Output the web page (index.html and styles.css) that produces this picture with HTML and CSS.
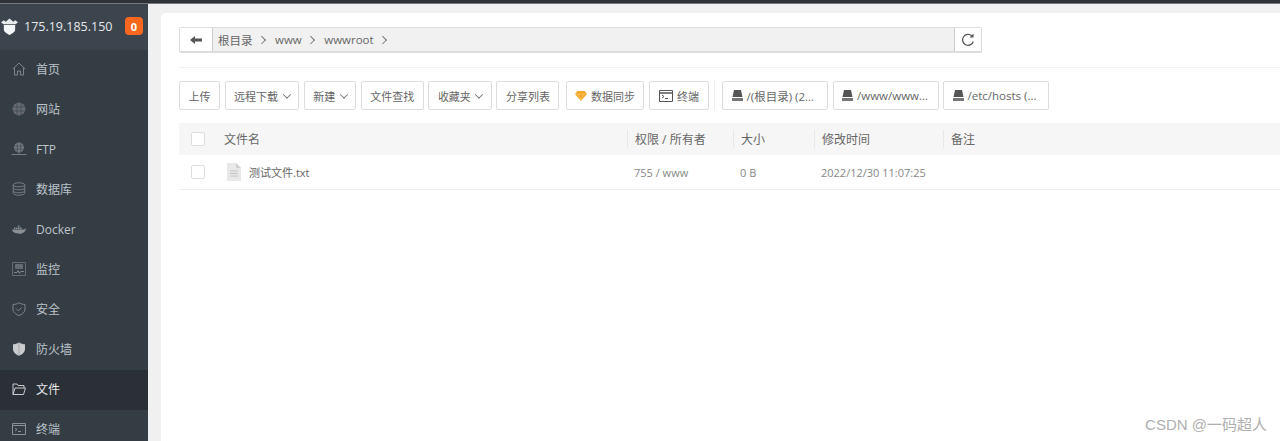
FILE: index.html
```html
<!DOCTYPE html>
<html lang="zh-CN">
<head>
<meta charset="utf-8">
<title>文件</title>
<link rel="stylesheet" href="styles.css">
</head>
<body>
<div class="topbar"></div>
<div class="app">
  <aside class="sidebar">
    <div class="server">
      <svg class="logo" viewBox="0 0 18 18"><path d="M0 4.500 3 2.500 5 4 9 .5 13 4 15 2.500 18 4.500 15.500 6.500H2.500Z" fill="#e8eaec"/><path d="M3 7.500H15V12C15 15 12 16.500 9 18 6 16.500 3 15 3 12Z" fill="#f4f5f6"/></svg>
      <span class="ip">175.19.185.150</span>
      <span class="badge">0</span>
    </div>
    <nav class="nav">
      <a class="nav-item"><svg class="ico" viewBox="0 0 14 14" fill="none" stroke="#7f858b"><path d="M.8 7 7 1l6.200 6M2.500 6v7h3V9h3v4h3V6"/></svg>首页</a>
      <a class="nav-item"><svg class="ico" viewBox="0 0 14 14" fill="#666c72"><circle cx="7" cy="7" r="6.500"/><path d="M.5 5h13M.5 9h13M5 .5v13M9 .5v13" stroke="#3a4249" stroke-width=".6"/></svg>网站</a>
      <a class="nav-item"><svg class="ico ico-wide" viewBox="0 0 16 14" fill="#767c82"><circle cx="8" cy="5.500" r="5"/><path d="M3 4h10M3 7h10M6.300 .5v10M9.700 .5v10" stroke="#3a4249" stroke-width=".6"/><path d="M7.500 10h1v1.500h-1ZM.5 12h15v1H.5Z"/></svg>FTP</a>
      <a class="nav-item"><svg class="ico" viewBox="0 0 14 14" fill="none" stroke="#767c82"><ellipse cx="7" cy="2.800" rx="5.800" ry="2"/><path d="M1.200 2.800v8.400c0 1.100 2.600 2 5.800 2s5.800-.9 5.800-2V2.800M1.200 5.800c0 1.100 2.600 2 5.800 2s5.800-.9 5.800-2M1.200 8.800c0 1.100 2.600 2 5.800 2s5.800-.9 5.800-2"/></svg>数据库</a>
      <a class="nav-item"><svg class="ico" viewBox="0 0 14 14" fill="#8b9095"><path d="M0 7.500h11.500c.8 0 1.500-.6 1.700-1l.8.200c-.6 2.500-2.500 5-6.500 5C3 11.700.6 10 0 7.500Z"/><path d="M2 5.500h1.500V7H2ZM4 5.500h1.500V7H4ZM6 5.500h1.500V7H6ZM6 3.500h1.500V5H6ZM8 5.500h1.500V7H8Z"/></svg>Docker</a>
      <a class="nav-item"><svg class="ico" viewBox="0 0 14 14" fill="none" stroke="#666c72"><path d="M.5.500h13v13H.5Z"/><path d="M3.500 2.500h7v4h-7Z" fill="#666c72"/><path d="M2 10.500h3l1-2 1.500 3 1-2H12" stroke="#7f858b"/></svg>监控</a>
      <a class="nav-item"><svg class="ico" viewBox="0 0 14 14" fill="none" stroke="#7f858b"><path d="M7 .8C5 2 3 2.400 1 2.500V7c0 3.500 3 5.500 6 6.500 3-1 6-3 6-6.500V2.500C11 2.400 9 2 7 .8Z"/><path d="m4.300 6.700 2.100 2.100 3.300-3.300"/></svg>安全</a>
      <a class="nav-item"><svg class="ico" viewBox="0 0 14 14" fill="#c9cbcd"><path d="M7 .5C5 1.800 3 2.200 1 2.300V7c0 3.500 3 5.500 6 6.800 3-1.300 6-3.300 6-6.800V2.300C11 2.200 9 1.800 7 .5Z"/><path d="M7 .5v13.300" stroke="#8f9499" stroke-width=".6"/></svg>防火墙</a>
      <a class="nav-item active"><svg class="ico" viewBox="0 0 14 14" fill="none" stroke="#c9cbcd"><path d="M1 12.500V2h4l1 1.500h6V6M1 12.500 3 6h10.500l-2 6.500Z"/></svg>文件</a>
      <a class="nav-item"><svg class="ico" viewBox="0 0 14 14" fill="none" stroke="#8b9095"><path d="M.5 1.500h13v11H.5ZM.5 3.500h13M3 6l2 1.500L3 9M6 9.500h3"/></svg>终端</a>
    </nav>
  </aside>
  <div class="content">
    <main class="panel">
      <div class="pathbar">
        <button class="back"><svg viewBox="0 0 12 10" width="12" height="10"><path d="M0 5 5 1v2.500h7v3H5V9Z" fill="#555"/></svg></button>
        <div class="crumbs">
          <span>根目录</span><i class="sep"></i><span>www</span><i class="sep"></i><span>wwwroot</span><i class="sep"></i>
        </div>
        <button class="refresh"><svg viewBox="0 0 14 14" width="14" height="14" fill="none" stroke="#555" stroke-width="1.200"><path d="M12.300 8.500A5.500 5.500 0 1 1 10.800 2.800"/><path d="M12.500 .6v3.900H8.600Z" fill="#555" stroke="none"/></svg></button>
      </div>
      <div class="toolbar">
        <button class="btn">上传</button>
        <button class="btn">远程下载<i class="caret"></i></button>
        <button class="btn">新建<i class="caret"></i></button>
        <button class="btn">文件查找</button>
        <button class="btn">收藏夹<i class="caret"></i></button>
        <button class="btn">分享列表</button>
        <button class="btn sync"><svg viewBox="0 0 12 10" width="12" height="10"><path d="M2.500 0h7L12 3 6 10 0 3Z" fill="#f5a623"/><path d="M0 3h12M3.500 3 6 10l2.500-7" stroke="#fbd38a" stroke-width=".6" fill="none"/></svg>数据同步</button>
        <button class="btn term"><svg viewBox="0 0 14 12" width="14" height="12" fill="none" stroke="#555"><path d="M.5.500h13v11H.5Z"/><path d="M.5 3h13" stroke-width="1.500"/><path d="m3 5 2 1.500L3 8M6 8.500h3"/></svg>终端</button>
        <span class="vline"></span>
        <button class="btn disk"><svg class="hd" viewBox="0 0 11 11"><path d="M2 0h7l1.500 7H.5Z" fill="#555"/><path d="M0 8h11v3H0Z" fill="#777"/></svg>/(根目录) (2...</button>
        <button class="btn disk"><svg class="hd" viewBox="0 0 11 11"><path d="M2 0h7l1.500 7H.5Z" fill="#555"/><path d="M0 8h11v3H0Z" fill="#777"/></svg>/www/www...</button>
        <button class="btn disk"><svg class="hd" viewBox="0 0 11 11"><path d="M2 0h7l1.500 7H.5Z" fill="#555"/><path d="M0 8h11v3H0Z" fill="#777"/></svg>/etc/hosts (...</button>
      </div>
      <div class="table">
        <div class="row head">
          <div class="c-name"><span class="check"></span><span class="title">文件名</span></div>
          <div class="cell">权限 / 所有者</div>
          <div class="cell">大小</div>
          <div class="cell">修改时间</div>
          <div class="cell">备注</div>
        </div>
        <div class="row body">
          <div class="c-name"><span class="check"></span>
            <svg class="file" viewBox="0 0 14 18"><path d="M0 0h9l5 5v13H0Z" fill="#e9e9e9"/><path d="M9 0v5h5Z" fill="#cfcfcf"/><path d="M3 8h8M3 10.500h8M3 13h8" stroke="#c4c4c4"/></svg>
            <span class="fname">测试文件.txt</span></div>
          <div class="cell">755 / www</div>
          <div class="cell">0 B</div>
          <div class="cell">2022/12/30 11:07:25</div>
          <div class="cell"></div>
        </div>
      </div>
    </main>
  </div>
</div>
<div class="watermark">CSDN @一码超人</div>
</body>
</html>
```
FILE: styles.css
```css
* { box-sizing: border-box; }
html, body { margin: 0; height: 100%; overflow: hidden; }
body {
  font-family: "Open Sans", "Noto Sans CJK SC", sans-serif;
  font-size: 12px;
  color: #666;
  background: #f0f0f0;
  display: flex;
  flex-direction: column;
}
.topbar { height: 4px; background: #2f3339; border-bottom: 1px solid #777; flex: none; }
.app { flex: 1; display: flex; min-height: 0; }
.sidebar { width: 148px; background: #353d44; flex: none; overflow: hidden; }
.server {
  height: 46px;
  background: #3c444d;
  display: flex;
  align-items: center;
  padding: 0 5px 2px 1px;
  color: #e4e8ec;
}
.logo { width: 17px; height: 17px; flex: none; margin-right: 6px; }
.ip { font-size: 12.500px; flex: 1; white-space: nowrap; }
.badge {
  width: 18px; height: 18px; border-radius: 4px; background: #f7671d; color: #fff;
  font-size: 11px; font-weight: 700; display: flex; align-items: center; justify-content: center;
}
.nav-item {
  height: 40px;
  display: flex;
  align-items: center;
  padding: 0 0 2px 12px;
  font-size: 12px;
  color: #bcc3ca;
}
.nav-item.active { background: #2b2f36; color: #e8eaec; }
.ico { width: 14px; height: 14px; margin-right: 10px; flex: none; }
.ico-wide { width: 16px; margin: 0 9px 0 -1px; }
.content { flex: 1; min-width: 0; padding: 9px 0 0 13px; }
.panel { background: #fff; height: 100%; border-radius: 5px 0 0 0; padding: 14px 0 0 18px; }
.pathbar {
  width: 803px; height: 26px; display: flex; border: 1px solid #ddd; border-bottom-width: 2px; border-radius: 2px;
  background: #f1f1f1;
}
.pathbar button { border: 0; background: #fff; padding: 0; display: flex; align-items: center; justify-content: center; }
.back { width: 33px; border-right: 1px solid #ccc !important; }
.refresh { width: 27px; border-left: 1px solid #ccc !important; }
.crumbs { flex: 1; display: flex; align-items: center; padding-left: 5px; font-size: 11.500px; color: #666; }
.sep { width: 5.500px; height: 5.500px; border: solid #777; border-width: 1px 1px 0 0; transform: rotate(45deg); margin: 0 11px 0 6px; }
.toolbar {
  margin-top: 14px; border-top: 1px solid #f2f2f2; padding-top: 13px; display: flex; align-items: center; height: 43px;
}
.btn {
  height: 29px; border: 1px solid #ddd; background: #fff; border-radius: 2px; color: #666;
  font: inherit; font-size: 11px; padding: 0 8.500px; margin-right: 4.600px; display: flex; align-items: center; justify-content: center; white-space: nowrap; flex: none;
}
.caret { width: 6px; height: 6px; border: solid #777; border-width: 0 1px 1px 0; transform: rotate(45deg) translate(-1px,-1px); margin-left: 5.500px; }
.sync svg, .term svg { margin-right: 4px; }
.sync { margin-left: 2px; padding: 0 8px; margin-right: 5px; }
.term { margin-right: 5px; padding: 0 9px; }
.vline { width: 1px; height: 29px; background: #eee; margin: 0 7px 0 0; flex: none; }
.disk { justify-content: flex-start; font-size: 11.500px; width: 106px; margin-right: 4.500px; }
.hd { width: 11px; height: 11px; margin-right: 4px; flex: none; }
.table { margin-top: 13px; }
.row { display: grid; grid-template-columns: 448px 106px 81px 129px 1fr; align-items: center; }
.head { height: 32px; background: #f6f6f6; color: #666; font-size: 12px; }
.body { height: 35px; border-bottom: 1px solid #eee; font-size: 11px; color: #888; }
.c-name { display: flex; align-items: center; padding-left: 12px; }
.check { width: 14px; height: 14px; border: 1px solid #ddd; border-radius: 2px; background: #fff; flex: none; }
.title { margin-left: 19px; }
.file { width: 14px; height: 18px; margin: 0 8px 0 22px; flex: none; }
.fname { font-size: 11px; color: #666; }
.cell { padding-left: 7px; height: 18px; display: flex; align-items: center; white-space: nowrap; }
.head .cell { border-left: 1px solid #e8e8e8; }
.watermark {
  position: absolute; right: 13px; bottom: 7px; font-family: "Liberation Sans", "Noto Sans CJK SC", sans-serif; font-size: 15px; color: #b0b0b0;
}
```
